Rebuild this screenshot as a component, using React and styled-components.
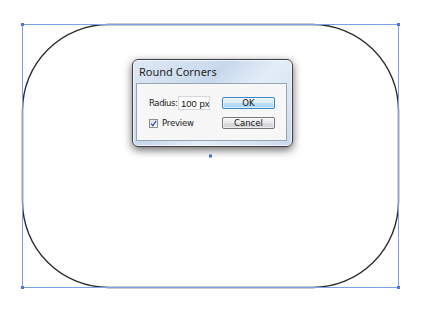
import React from 'react';
import styled, { createGlobalStyle } from 'styled-components';

const GlobalStyle = createGlobalStyle`
  html, body {
    margin: 0;
    padding: 0;
    background: #fff;
  }
  body {
    font-family: "Noto Sans", "Liberation Sans", sans-serif;
  }
`;

export default function App() {
  return (
    <Canvas>
      <GlobalStyle/>
      <Artwork/>
      <Dialog>
        <TitleBar>Round Corners</TitleBar>
        <Panel>
          <Row>
            <Label>Radius:</Label>
            <Field value="100 px" readOnly/>
            <Button primary>OK</Button>
          </Row>
          <Row>
            <Check>
              <Box>
                <svg width="7" height="7" viewBox="0 0 7 7">
                  <path d="M1 3.6 L2.8 5.6 L6.2 0.8" fill="none" stroke="#2a56b8" strokeWidth="1.3"/>
                </svg>
              </Box>
              Preview
            </Check>
            <Button>Cancel</Button>
          </Row>
        </Panel>
      </Dialog>
    </Canvas>
  );
}

function Artwork() {
  const x1 = 2.5, y1 = 2.5, x2 = 378.5, y2 = 265.5;
  return (
    <ArtSvg width="381" height="268" viewBox="0 0 381 268">
      <rect x={x1} y={y1} width={x2 - x1} height={y2 - y1} rx="86" ry="86"
            fill="#fff" stroke="#2e2e2e" strokeWidth="1.4"/>
      <rect x={x1} y={y1} width={x2 - x1} height={y2 - y1}
            fill="none" stroke="#7f9fe6" strokeWidth="1"/>
      {[[x1, y1], [x2, y1], [x1, y2], [x2, y2], [(x1 + x2) / 2, (y1 + y2) / 2]].map(([cx, cy], i) => (
        <rect key={i} x={cx - 1.5} y={cy - 1.5} width="3" height="3" fill="#4f74d9"/>
      ))}
    </ArtSvg>
  );
}

const Canvas = styled.div`
  position: relative;
  width: 424px;
  height: 312px;
  padding: 22px 0 0 20px;
  box-sizing: border-box;
  overflow: hidden;
`;

const ArtSvg = styled.svg`
  display: block;
`;

const Dialog = styled.div`
  position: absolute;
  left: 132px;
  top: 59px;
  width: 161px;
  height: 88px;
  box-sizing: border-box;
  border: 1px solid #3d4046;
  border-radius: 6px;
  background: linear-gradient(135deg, #dfe9f5 0%, #c8d8ec 40%, #e3edf8 60%, #cbdaed 100%);
  box-shadow: 0 3px 8px rgba(0, 0, 0, 0.6), inset 0 0 0 1px rgba(255, 255, 255, 0.7);
  padding: 0 5px 5px 3px;
  display: flex;
  flex-direction: column;
`;

const TitleBar = styled.div`
  height: 23px;
  display: flex;
  align-items: center;
  padding-left: 3px;
  font-size: 11px;
  color: #1e1e1e;
`;

const Panel = styled.div`
  flex: 1;
  background: #f7f7f7;
  border: 1px solid #97a5b5;
  display: flex;
  flex-direction: column;
  gap: 8px;
  padding: 13px 11px 0 12px;
  font-family: "DejaVu Sans", "Liberation Sans", sans-serif;
  font-size: 8.5px;
  color: #222;
`;

const Row = styled.div`
  display: flex;
  align-items: center;
  height: 12px;
`;

const Label = styled.span`
  width: 29px;
  letter-spacing: -0.4px;
`;

const Field = styled.input`
  width: 32px;
  height: 14px;
  box-sizing: border-box;
  border: 1px solid #d4d8de;
  background: #fff;
  padding: 0 0 0 2px;
  font-family: "Liberation Sans", sans-serif;
  font-size: 9.5px;
  color: #111;
  outline: none;
`;

const Button = styled.div`
  margin-left: auto;
  width: 53px;
  height: 12px;
  box-sizing: border-box;
  border: 1px solid ${p => (p.primary ? '#3b86c5' : '#777')};
  border-radius: 2px;
  background: ${p => (p.primary
    ? 'linear-gradient(#eaf5fc 0%, #d9edfa 50%, #bfe0f6 51%, #a9d4f3 100%)'
    : 'linear-gradient(#f4f4f4 0%, #ebebeb 50%, #dddddd 51%, #d2d2d2 100%)')};
  box-shadow: inset 0 0 0 1px rgba(255, 255, 255, 0.6);
  display: flex;
  align-items: center;
  justify-content: center;
  font-size: 8.5px;
  color: #111;
`;

const Check = styled.div`
  display: flex;
  align-items: center;
  gap: 4px;
  letter-spacing: -0.2px;
`;

const Box = styled.span`
  width: 9px;
  height: 9px;
  box-sizing: border-box;
  border: 1px solid #8b8f96;
  background: linear-gradient(135deg, #dfe3ea, #fdfdfd);
  display: flex;
  align-items: center;
  justify-content: center;
`;
